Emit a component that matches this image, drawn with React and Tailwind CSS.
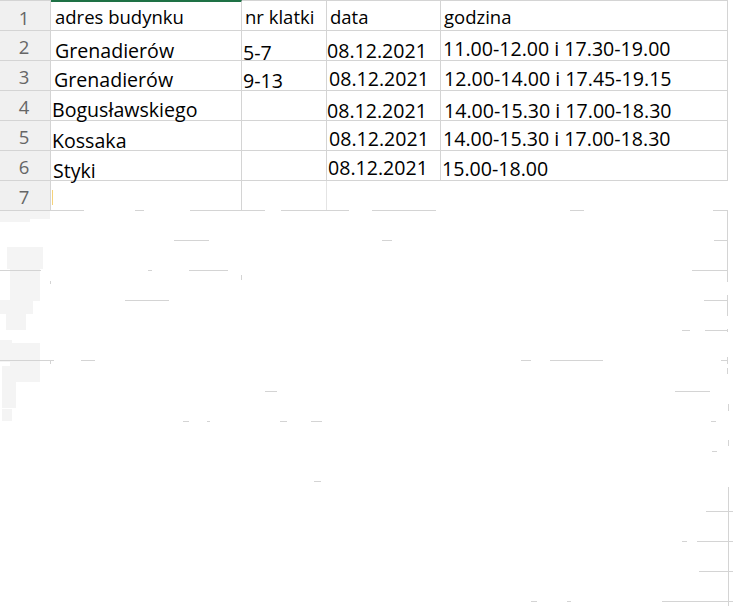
import React from "react";

const rows = [
  {
    n: "1",
    cells: [
      { t: "adres budynku", pl: 4, pt: 7, h: true },
      { t: "nr klatki", pl: 3, pt: 7, h: true },
      { t: "data", pl: 3, pt: 7, h: true },
      { t: "godzina", pl: 3, pt: 7, h: true },
    ],
  },
  {
    n: "2",
    cells: [
      { t: "Grenadierów", pl: 4, pt: 10 },
      { t: "5-7", pl: 1, pt: 12 },
      { t: "08.12.2021", pl: 0, pt: 10 },
      { t: "11.00-12.00 i 17.30-19.00", pl: 2, pt: 8 },
    ],
  },
  {
    n: "3",
    cells: [
      { t: "Grenadierów", pl: 3, pt: 9 },
      { t: "9-13", pl: 1, pt: 10 },
      { t: "08.12.2021", pl: 2, pt: 8 },
      { t: "12.00-14.00 i 17.45-19.15", pl: 3, pt: 8 },
    ],
  },
  {
    n: "4",
    cells: [
      { t: "Bogusławskiego", pl: 1, pt: 9 },
      { t: "", pl: 0, pt: 0 },
      { t: "08.12.2021", pl: 0, pt: 10 },
      { t: "14.00-15.30 i 17.00-18.30", pl: 3, pt: 10 },
    ],
  },
  {
    n: "5",
    cells: [
      { t: "Kossaka", pl: 1, pt: 10 },
      { t: "", pl: 0, pt: 0 },
      { t: "08.12.2021", pl: 2, pt: 8 },
      { t: "14.00-15.30 i 17.00-18.30", pl: 2, pt: 8 },
    ],
  },
  {
    n: "6",
    cells: [
      { t: "Styki", pl: 2, pt: 10 },
      { t: "", pl: 0, pt: 0 },
      { t: "08.12.2021", pl: 1, pt: 7 },
      { t: "15.00-18.00", pl: 1, pt: 8 },
    ],
  },
];

const widths = ["w-[191px]", "w-[85px]", "w-[114px]", "w-[287px]"];

// remnants of the erased grid: [x, y, w, h]
const frags = [
  [0, 210, 84, 1], [135, 210, 9, 1], [190, 210, 75, 1], [281, 210, 68, 1],
  [372, 210, 64, 1], [570, 210, 14, 1], [713, 210, 14, 1],
  [174, 240, 35, 1], [382, 240, 10, 1], [714, 240, 13, 1],
  [0, 270, 41, 1], [148, 270, 4, 1], [189, 270, 39, 1], [692, 270, 35, 1],
  [125, 300, 44, 1], [704, 300, 23, 1],
  [682, 330, 8, 1], [705, 330, 23, 1],
  [0, 360, 54, 1], [81, 360, 14, 1], [521, 360, 10, 1], [550, 360, 53, 1], [721, 360, 6, 1],
  [265, 391, 12, 1], [675, 391, 35, 1],
  [183, 421, 6, 1], [207, 421, 3, 1], [280, 421, 7, 1], [311, 421, 11, 1], [711, 421, 5, 1],
  [712, 451, 5, 1], [314, 481, 7, 1],
  [706, 511, 27, 1], [682, 541, 5, 1], [697, 541, 36, 1], [699, 571, 34, 1],
  [531, 601, 6, 1], [567, 601, 4, 1], [662, 601, 71, 1],
  [727, 210, 1, 72], [727, 295, 1, 21], [727, 329, 1, 3], [727, 357, 1, 7],
  [727, 368, 1, 6], [728, 404, 1, 7], [728, 440, 1, 6], [728, 487, 1, 119],
  [241, 275, 1, 5], [50, 281, 1, 3], [50, 360, 1, 4],
];

const blobs = [
  [0, 211, 50, 8], [0, 219, 30, 3],
  [7, 247, 36, 22], [10, 253, 30, 48], [0, 300, 33, 14], [6, 314, 20, 16],
  [0, 340, 12, 22], [10, 343, 30, 30], [16, 372, 24, 10], [2, 366, 14, 40],
  [2, 382, 14, 26], [2, 409, 10, 12],
];

export default function App() {
  return (
    <div
      className="relative w-[738px] h-[606px] overflow-hidden bg-white text-black"
      style={{ fontFamily: '"Open Sans", "Noto Sans", sans-serif' }}
    >
      <div className="flex flex-col w-[728px]">
        {rows.map((r, i) => (
          <div
            key={r.n}
            className={
              "flex h-[30px] " + (i === 0 ? "h-[31px]" : "")
            }
          >
            <div
              className={
                "w-[51px] shrink-0 bg-[#f0f0f0] border-r border-b border-[#d4d4d4] text-[#666666] text-[18.5px] leading-[18px] text-center pr-[2px] " +
                (i === 0 ? "pt-[8px] border-t" : "pt-[7px]")
              }
            >
              {r.n}
            </div>
            {r.cells.map((c, j) => (
              <div
                key={j}
                className={
                  widths[j] +
                  " shrink-0 border-r border-b border-[#d4d4d4] whitespace-nowrap overflow-visible " +
                  (i === 0 ? (j === 0 ? "border-t-2 border-t-[#1e7145]" : "border-t border-t-[#d4d4d4]") : "")
                }
              >
                <div
                  className={
                    c.h ? "text-[18.5px] leading-[18.5px]" : "text-[19.6px] leading-[19.6px]"
                  }
                  style={{ paddingLeft: c.pl, paddingTop: i === 0 && j === 0 ? c.pt - 1 : c.pt }}
                >
                  {c.t}
                </div>
              </div>
            ))}
          </div>
        ))}
        <div className="flex h-[30px]">
          <div className="w-[51px] shrink-0 bg-[#f0f0f0] border-r border-[#d4d4d4] text-[#666666] text-[18.5px] leading-[18px] text-center pr-[2px] pt-[7px]">
            7
          </div>
          <div className="w-[191px] shrink-0 border-r border-[#d4d4d4] pl-[1px] pt-[9px]">
            <div className="w-[1px] h-[15px] bg-[#f5d27a]"></div>
          </div>
          <div className="w-[85px] shrink-0 border-r border-[#e4e4e4]"></div>
          <div className="w-[114px] shrink-0"></div>
        </div>
      </div>
      {blobs.map(([x, y, w, h], k) => (
        <div
          key={"b" + k}
          className="absolute bg-[#f4f4f4]"
          style={{ left: x, top: y, width: w, height: h }}
        />
      ))}
      {frags.map(([x, y, w, h], k) => (
        <div
          key={"f" + k}
          className="absolute bg-[#d4d4d4]"
          style={{ left: x, top: y, width: w, height: h }}
        />
      ))}
    </div>
  );
}
